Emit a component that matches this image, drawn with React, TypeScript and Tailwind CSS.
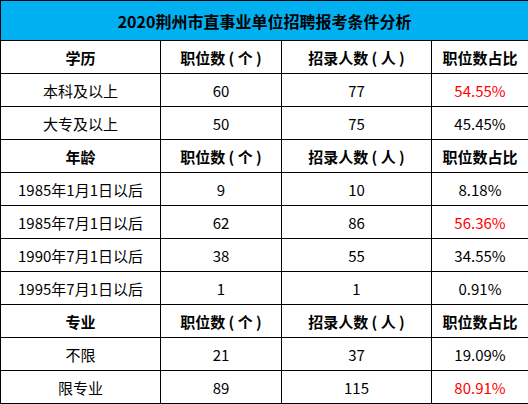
import { Fragment } from 'react';

const font = { fontFamily: '"Microsoft YaHei", "Noto Sans CJK SC", "Noto Sans", sans-serif' };

type Row = { label: string; count: string; hires: string; ratio: string; red?: boolean };

const sections: { title: string; rows: Row[] }[] = [
  {
    title: '学历',
    rows: [
      { label: '本科及以上', count: '60', hires: '77', ratio: '54.55%', red: true },
      { label: '大专及以上', count: '50', hires: '75', ratio: '45.45%' },
    ],
  },
  {
    title: '年龄',
    rows: [
      { label: '1985年1月1日以后', count: '9', hires: '10', ratio: '8.18%' },
      { label: '1985年7月1日以后', count: '62', hires: '86', ratio: '56.36%', red: true },
      { label: '1990年7月1日以后', count: '38', hires: '55', ratio: '34.55%' },
      { label: '1995年7月1日以后', count: '1', hires: '1', ratio: '0.91%' },
    ],
  },
  {
    title: '专业',
    rows: [
      { label: '不限', count: '21', hires: '37', ratio: '19.09%' },
      { label: '限专业', count: '89', hires: '115', ratio: '80.91%', red: true },
    ],
  },
];

const cell = 'border border-black text-center align-middle p-0 text-[15px] leading-none';

export default function App() {
  return (
    <div className="w-[528px] h-[404px] bg-white" style={font}>
      <table className="w-[528px] table-fixed border-collapse border border-black text-black">
        <colgroup>
          <col className="w-[160px]" />
          <col className="w-[121px]" />
          <col className="w-[150px]" />
          <col className="w-[97px]" />
        </colgroup>
        <tbody>
          <tr className="h-[40px] bg-[#00b0f0]">
            <td colSpan={4} className="border border-black text-center align-middle p-0 text-[16px] font-bold leading-none">
              2020荆州市直事业单位招聘报考条件分析
            </td>
          </tr>
          {sections.map((s) => (
            <Fragment key={s.title}>
              {/* section header */}
              <tr className="h-[33px] font-bold">
                <td className={cell}>{s.title}</td>
                <td className={cell}>职位数 ( 个 )</td>
                <td className={cell}>招录人数 ( 人 )</td>
                <td className={cell}>职位数占比</td>
              </tr>
              {s.rows.map((r) => (
                <tr key={r.label} className="h-[33px]">
                  <td className={cell}>{r.label}</td>
                  <td className={cell}>{r.count}</td>
                  <td className={cell}>{r.hires}</td>
                  <td className={`${cell} ${r.red ? 'text-[#ff0000]' : ''}`}>{r.ratio}</td>
                </tr>
              ))}
            </Fragment>
          ))}
        </tbody>
      </table>
    </div>
  );
}
